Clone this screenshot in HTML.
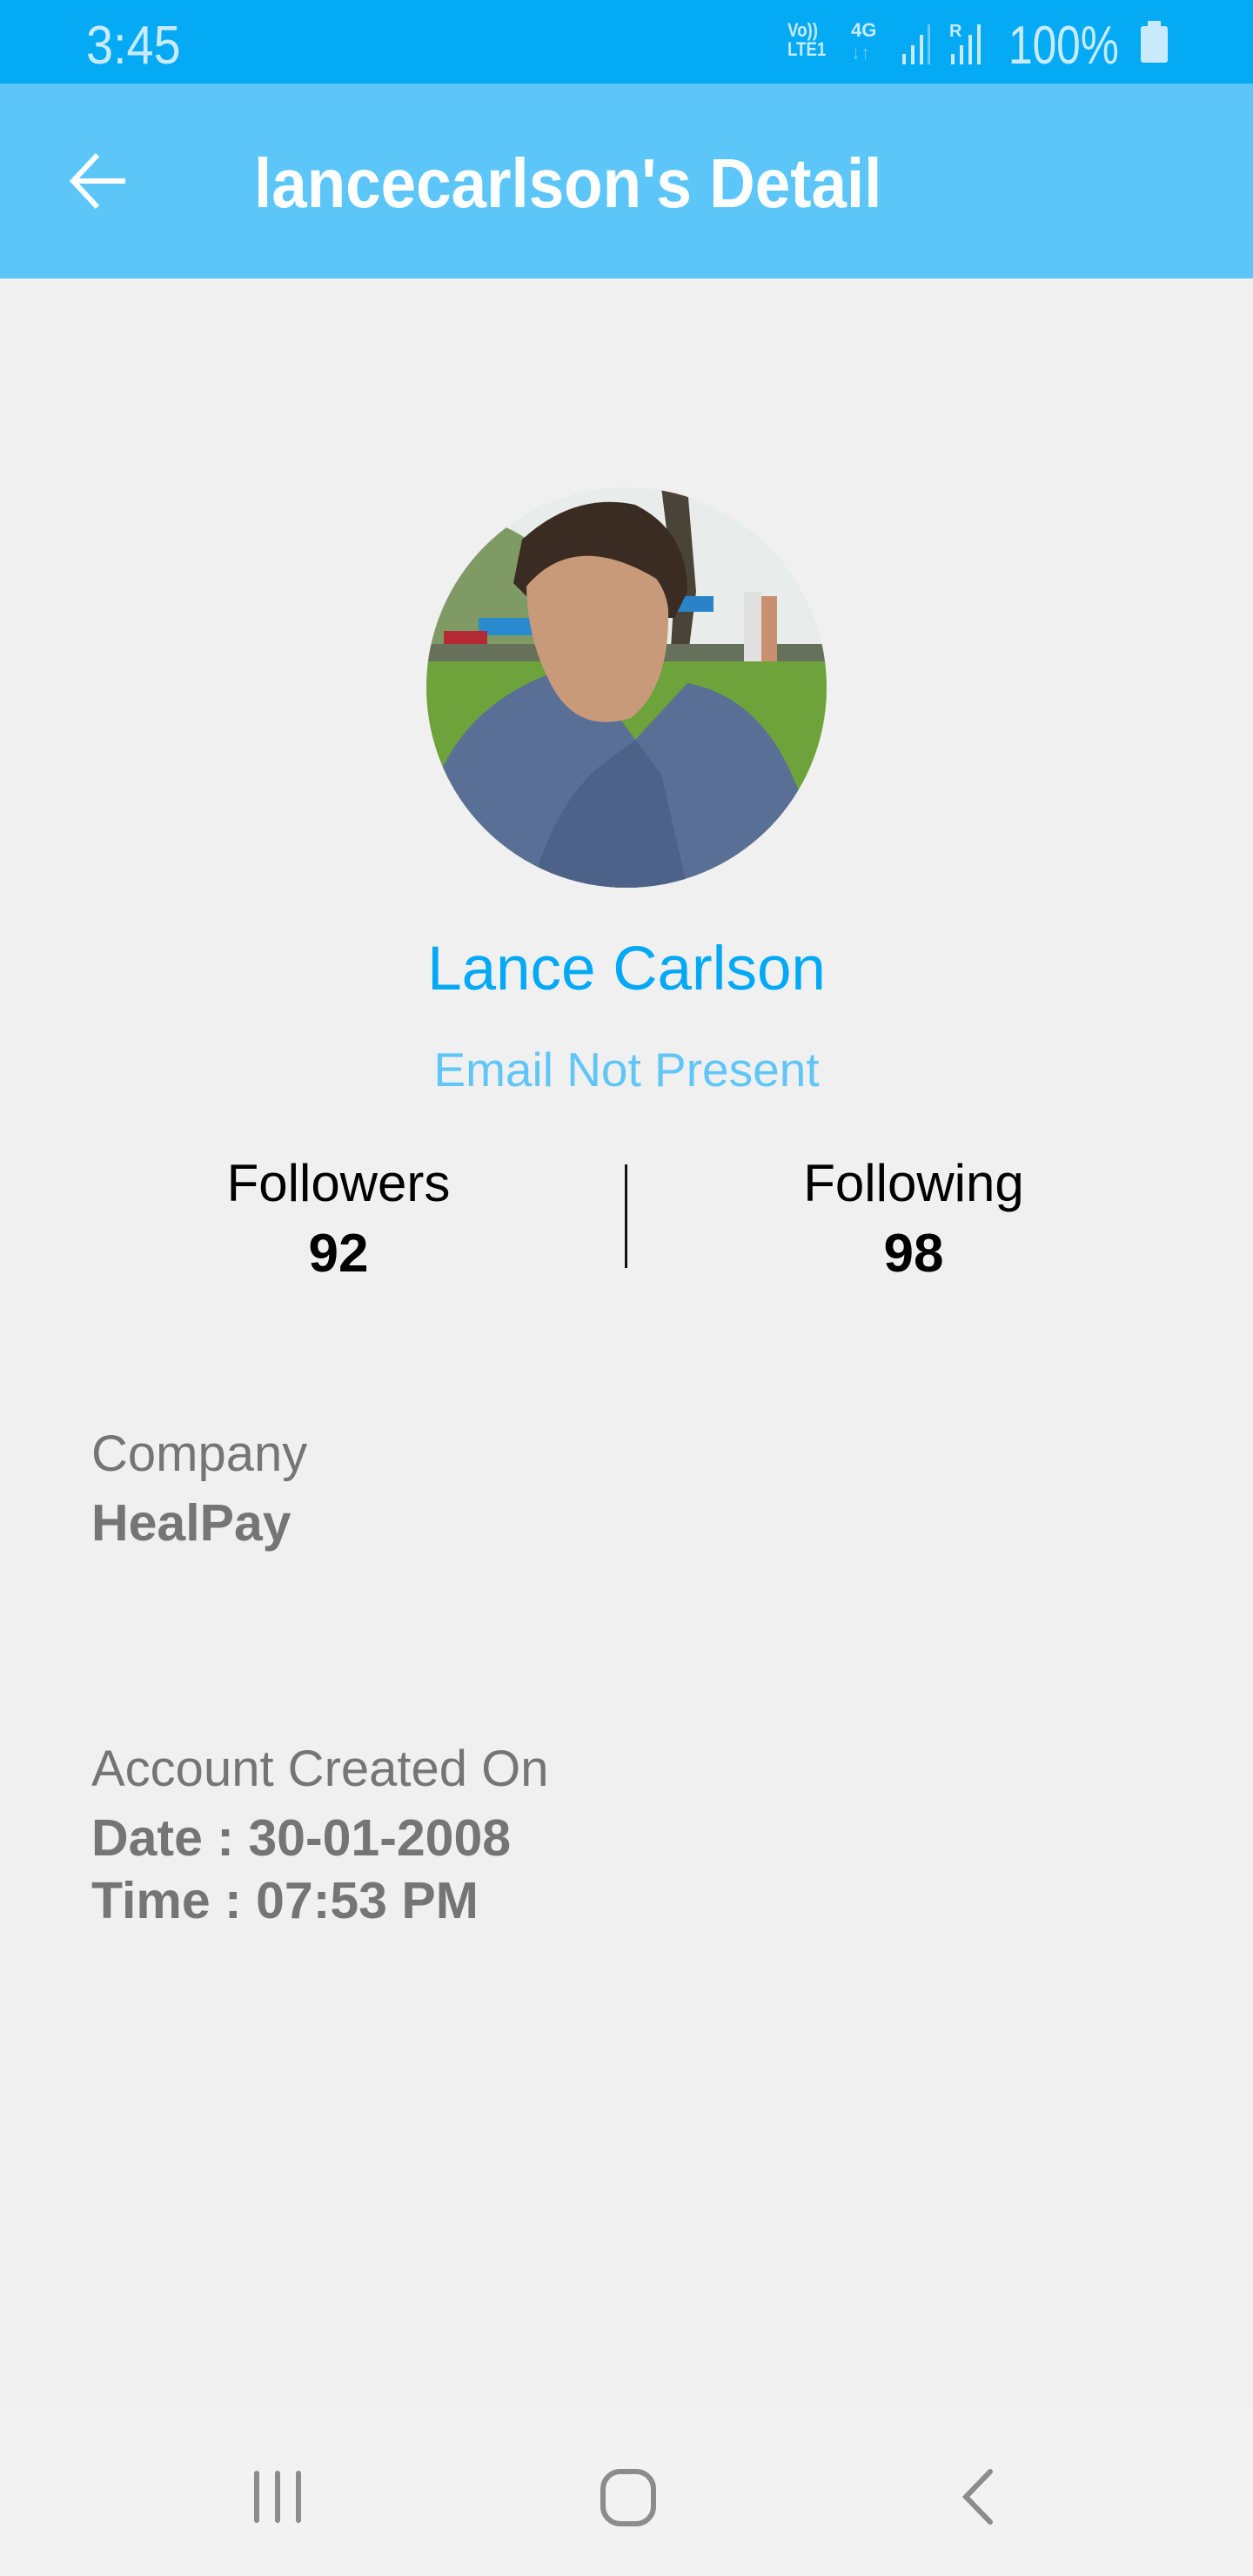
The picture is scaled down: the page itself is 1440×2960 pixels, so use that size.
<!DOCTYPE html>
<html><head><meta charset="utf-8"><style>
*{margin:0;padding:0;box-sizing:border-box}
body{width:1440px;height:2960px;background:#f0f0f0;position:relative;overflow:hidden;font-family:"Liberation Sans",sans-serif}
.a{position:absolute;white-space:nowrap;line-height:1}
.c{transform:translateX(-50%)}
</style></head><body>
<div class="a" style="left:0;top:0;width:1440px;height:96px;background:#05aaf5"></div>
<div class="a" style="left:99px;top:22px;font-size:62px;color:#c8eafc;transform:scaleX(0.9);transform-origin:left">3:45</div>
<div class="a" style="left:905px;top:24px;font-size:22px;font-weight:bold;color:#c8eafc;line-height:22px;transform:scaleX(0.85);transform-origin:left">Vo))<br>LTE1</div>
<div class="a" style="left:978px;top:24px;font-size:22px;font-weight:bold;color:#c8eafc">4G</div>
<div class="a" style="left:978px;top:50px;font-size:22px;color:#6cc8f5">↓↑</div>
<svg class="a" style="left:1035px;top:24px" width="100" height="50"><g fill="#c8eafc"><rect x="2" y="38" width="4" height="12"/><rect x="12" y="28" width="4" height="22"/><rect x="22" y="16" width="4" height="34"/><rect x="31" y="4" width="3" height="46" fill="#6cc8f5"/><rect x="58" y="38" width="4" height="12"/><rect x="68" y="28" width="4" height="22"/><rect x="78" y="16" width="4" height="34"/><rect x="88" y="4" width="4" height="46"/></g><text x="56" y="18" font-size="20" font-weight="bold" fill="#c8eafc" font-family="Liberation Sans">R</text></svg>
<div class="a" style="left:1159px;top:22px;font-size:62px;color:#c8eafc;transform:scaleX(0.8);transform-origin:left">100%</div>
<div class="a" style="left:1311px;top:30px;width:31px;height:42px;background:#c8eafc;border-radius:3px"></div>
<div class="a" style="left:1319px;top:24px;width:15px;height:8px;background:#c8eafc"></div>

<div class="a" style="left:0;top:96px;width:1440px;height:224px;background:#5dc6f9"></div>
<svg class="a" style="left:78px;top:174px" width="70" height="68"><path d="M66 34H8M34 4L6 34L34 64" stroke="#fff" stroke-width="6" fill="none"/></svg>
<div class="a" style="left:292px;top:171px;font-size:80px;font-weight:bold;color:#fff;transform:scaleX(0.91);transform-origin:left">lancecarlson's Detail</div>

<svg class="a" style="left:490px;top:560px" width="460" height="460" viewBox="0 0 460 460">
<defs><clipPath id="cp"><circle cx="230" cy="230" r="230"/></clipPath></defs>
<g clip-path="url(#cp)">
<rect width="460" height="460" fill="#e8ecea"/>
<path d="M0 40Q80 20 140 80L150 200H0Z" fill="#7f9a65"/>
<path d="M270 0L300 0L310 120L300 200H280L285 120Z" fill="#4a4438"/>
<rect x="60" y="150" width="80" height="20" fill="#2a8ad0"/>
<rect x="20" y="165" width="50" height="20" fill="#b32a35"/>
<rect x="280" y="125" width="50" height="18" fill="#2a82c8"/>
<rect x="0" y="180" width="460" height="25" fill="#66705a"/>
<rect x="365" y="120" width="20" height="85" fill="#e0e0e0"/>
<rect x="385" y="125" width="18" height="80" fill="#c99070"/>
<rect x="0" y="200" width="460" height="260" fill="#6da33a"/>
<path d="M15 330Q50 250 140 215L200 235L240 290L300 225Q380 240 420 330L450 400L440 460H20Z" fill="#5a6f96"/>
<path d="M120 460Q150 360 200 320L240 290L270 330L300 460Z" fill="#4d6288"/>
<path d="M110 60Q170 5 240 20Q300 50 300 120L285 150L140 150L100 110Z" fill="#3a2c22"/>
<path d="M115 110Q125 60 190 70Q270 80 278 140Q280 230 235 265Q170 285 140 220Q115 170 115 110Z" fill="#c99a7a"/>
<path d="M110 120Q170 40 280 115L290 85Q250 15 180 25Q110 45 105 105Z" fill="#3a2c22"/>
</g></svg>

<div class="a c" style="left:720px;top:1078px;font-size:71px;color:#03a9f4">Lance Carlson</div>
<div class="a c" style="left:720px;top:1202px;font-size:55px;color:#5fc6f7">Email Not Present</div>
<div class="a c" style="left:389px;top:1330px;font-size:60px;color:#000">Followers</div>
<div class="a c" style="left:389px;top:1410px;font-size:62px;font-weight:bold;color:#000">92</div>
<div class="a" style="left:718px;top:1338px;width:3px;height:119px;background:#111"></div>
<div class="a c" style="left:1050px;top:1330px;font-size:60px;color:#000">Following</div>
<div class="a c" style="left:1050px;top:1410px;font-size:62px;font-weight:bold;color:#000">98</div>

<div class="a" style="left:105px;top:1642px;font-size:58px;color:#757575">Company</div>
<div class="a" style="left:105px;top:1721px;font-size:59px;font-weight:bold;color:#757575">HealPay</div>
<div class="a" style="left:105px;top:2004px;font-size:58px;color:#757575">Account Created On</div>
<div class="a" style="left:105px;top:2083px;font-size:59px;font-weight:bold;color:#757575">Date : 30-01-2008</div>
<div class="a" style="left:105px;top:2155px;font-size:59px;font-weight:bold;color:#757575">Time : 07:53 PM</div>

<div class="a" style="left:0;top:2768px;width:1440px;height:192px;background:#f2f2f2"></div>
<svg class="a" style="left:280px;top:2830px" width="900" height="80"><g stroke="#8c8c8c" fill="none" stroke-width="6" stroke-linecap="round"><path d="M15 12V66M39 12V66M63 12V66"/><rect x="413" y="10" width="58" height="60" rx="20"/><path d="M858 10L830 39L858 68"/></g></svg>
</body></html>
